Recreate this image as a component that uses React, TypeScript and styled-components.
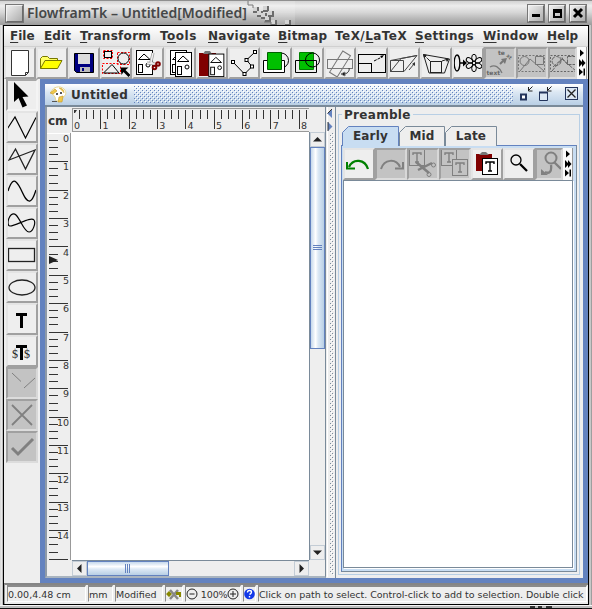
import React from "react";
import styled, { createGlobalStyle, css } from "styled-components";

const BLUE = "#6382bf";
const STEEL = "#7a8a99";
const PANEL = "#eeeeee";

const Global = createGlobalStyle`
  * { box-sizing: border-box; }
  body { margin: 0; overflow: hidden; background: #c8c8c8; }
  svg { display: block; flex: none; }
`;

const Shell = styled.div`
  width: 592px;
  height: 609px;
  display: flex;
  flex-direction: column;
  background: linear-gradient(90deg, #c4c4c4 0, #f4f4f4 1px, #d8d8d8 2px, #a2a2a2 3px, #a2a2a2 589px, #dcdcdc 590px, #8a8a8a 592px);
  color: #333333;
  font-family: "DejaVu Sans", sans-serif;
  white-space: nowrap;
`;

const TitleBar = styled.header`
  height: 25px;
  flex: none;
  display: flex;
  align-items: center;
  padding: 0 5px;
  border-top: 1px solid #8f8f8f;
  background: linear-gradient(#d2d2d2, #ededed 20%, #d6d6d6 48%, #b6b6b6 75%, #9c9c9c);
`;

const bevel = css`
  border: 2px solid;
  border-color: #f2f2f2 #6a6a6a #6a6a6a #f2f2f2;
  outline: 1px solid #777777;
  outline-offset: -1px;
  background: linear-gradient(135deg, #eeeeee, #adadad);
`;

const WindowMenuBox = styled.div`
  width: 19px;
  height: 19px;
  ${bevel}
`;

const WindowTitle = styled.h1`
  margin: 0 0 0 3px;
  width: 220px;
  font: 600 14px/20px "Noto Sans", sans-serif;
  color: #454748;
`;

const WindowButtons = styled.div`
  display: flex;
  gap: 3px;
  margin-left: auto;
`;

const WindowButton = styled.div`
  width: 18px;
  height: 19px;
  display: grid;
  place-items: center;
  ${bevel}
`;

const Client = styled.main`
  width: 586px;
  margin-left: 3px;
  height: 580px;
  flex: none;
  display: flex;
  flex-direction: column;
  border: 1px solid #000;
  background: ${PANEL};
`;

const MenuBar = styled.nav`
  height: 21px;
  flex: none;
  display: flex;
  background: linear-gradient(#ffffff, #e2e2e2);
  border-bottom: 1px solid #d0d0d0;
`;

const MenuItem = styled.span<{ $w: number; $track: number }>`
  width: ${(p) => p.$w}px;
  padding-left: 6px;
  font: bold 12px/20px "DejaVu Sans", sans-serif;
  letter-spacing: ${(p) => p.$track}px;
  u { text-underline-offset: 2px; text-decoration-thickness: 1px; }
`;

const Toolbar = styled.div`
  display: flex;
  height: 32px;
  flex: none;
`;

const ToolButton = styled.div<{ $off?: boolean; $w?: number; $down?: boolean }>`
  width: ${(p) => p.$w ?? 32}px;
  height: 32px;
  flex: none;
  overflow: hidden;
  border: 2px solid;
  border-color: ${(p) =>
    p.$off ? "#a0a0a0 #d8d8d8 #dcdcdc #a0a0a0" : p.$down ? "#a8a8a8 #f4f4f4 #f4f4f4 #a0a0a0" : "#e4e4e4 #a0a0a0 #a0a0a0 #e4e4e4"};
  background: ${(p) => (p.$off ? "#c3c3c3" : PANEL)};
  svg { margin: -2px; }
`;

const MoreButton = styled.div`
  width: 10px;
  height: 32px;
  background: #fafafa;
  border-right: 1px solid #999;
`;

const Middle = styled.div`
  display: flex;
  height: 504px;
  flex: none;
`;

const SideTools = styled.div`
  width: 36px;
  flex: none;
  padding-left: 2px;
`;

const InternalFrame = styled.section`
  width: 548px;
  padding: 5px;
  background: ${BLUE};
`;

const InternalTitle = styled.div`
  height: 23px;
  display: flex;
  align-items: center;
  padding-left: 5px;
  background: linear-gradient(#ffffff, #dbe7f3 40%, #b9cfe5);
  border-bottom: 2px solid ${STEEL};
`;

const InternalName = styled.h2`
  margin: 0 0 0 4px;
  width: 63px;
  font: bold 12px/18px "DejaVu Sans", sans-serif;
  letter-spacing: 0.3px;
`;

const Content = styled.div`
  display: flex;
  height: 471px;
  background: ${PANEL};
`;

const CanvasPane = styled.div`
  width: 281px;
  flex: none;
  display: grid;
  grid-template-columns: 24px 238px 16px;
  grid-template-rows: 25px 428px 16px;
  border: solid ${STEEL};
  border-width: 0 1px 2px 2px;
  border-left-color: #8f9aa6;
  border-bottom-color: #a9b4bf;
`;

const UnitCell = styled.div`
  padding: 7px 0 0 1px;
  font: bold 12px/14px "DejaVu Sans", sans-serif;
`;

const Page = styled.div`
  background: #fff;
`;

const HorizontalBar = styled.div`
  grid-column: 2;
  display: flex;
  margin-left: 1px;
  border-top: 1px solid ${STEEL};
`;

const VerticalBar = styled.div`
  display: flex;
  flex-direction: column;
  border-left: 1px solid ${STEEL};
`;

const Track = styled.div`
  flex: 1;
  background: ${PANEL};
`;

const ScrollArrow = styled.div`
  width: 15px;
  height: 15px;
  flex: none;
  background: ${PANEL};
  border: 1px solid #c3ccd5;
  display: grid;
  place-items: center;
`;

const Thumb = styled.div<{ $vertical?: boolean; $len: number }>`
  display: grid;
  place-items: center;
  flex: none;
  border: 1px solid ${BLUE};
  ${(p) =>
    p.$vertical
      ? css`
          height: ${p.$len}px;
          background: linear-gradient(90deg, #c5d8ec, #ffffff 35%, #dde9f5 55%, #b8cfe5);
        `
      : css`
          width: ${p.$len}px;
          background: linear-gradient(#c5d8ec, #ffffff 35%, #dde9f5 55%, #b8cfe5);
        `}
`;

const Divider = styled.div`
  width: 10px;
  flex: none;
  border-right: 1px solid ${STEEL};
  background: ${PANEL};
`;

const SidePane = styled.div`
  width: 247px;
  padding: 0 3px 3px 2px;
`;

const Preamble = styled.fieldset`
  margin: 0;
  padding: 0 2px 1px 2px;
  border: 1px solid #b8cfe5;
  height: 468px;
  min-width: 0;
`;

const Legend = styled.legend`
  margin-left: 1px;
  padding: 1px 2px 0;
  font: bold 12px/14px "DejaVu Sans", sans-serif;
  letter-spacing: 0.3px;
`;

const Tabs = styled.div`
  display: flex;
  height: 20px;
  margin: 4px 0 -1px 1px;
`;

const Tab = styled.div<{ $w: number }>`
  position: relative;
  width: ${(p) => p.$w}px;
  font: bold 12px/20px "DejaVu Sans", sans-serif;
  letter-spacing: 0.2px;
  text-align: center;
  svg { position: absolute; inset: 0; }
  span { position: relative; }
`;

const TabBody = styled.div`
  height: 427px;
  padding: 2px 3px 3px 1px;
  border: 1px solid ${STEEL};
  border-left-color: ${BLUE};
  border-top-color: ${BLUE};
  background: #c8ddf2;
`;

const TabToolbar = styled(Toolbar)`
  background: ${PANEL};
`;

const Editor = styled.div`
  height: 388px;
  background: #fff;
  border: 1px solid ${STEEL};
  box-shadow: 1px 1px #fff;
`;

const StatusBar = styled.footer`
  height: 21px;
  flex: none;
  display: flex;
  gap: 2px;
  padding: 0 2px;
  border-top: 2px solid #858585;
  border-left: 1px solid #999;
`;

const StatusCell = styled.div<{ $w: number; $track?: number }>`
  width: ${(p) => p.$w}px;
  height: 17px;
  flex: none;
  overflow: hidden;
  display: flex;
  align-items: center;
  border: solid;
  border-width: 2px 1px 1px 1px;
  border-color: #8a8a8a #fff #fff #8a8a8a;
  font: 9.5px/13px "DejaVu Sans", sans-serif;
  letter-spacing: ${(p) => p.$track ?? 0}px;
`;

const Grip = styled.div`
  height: 4px;
  border-top: 1px solid #f4f4f4;
  border-bottom: 1px solid #111;
  background: #bdbdbd;
`;

const Ic = ({ children, c = "#000" }: { children: React.ReactNode; c?: string }) => (
  <svg width="32" height="32" viewBox="0 0 32 32" fill="none" stroke={c} strokeWidth="1">
    {children}
  </svg>
);

const Doc = ({ x, y }: { x: number; y: number }) => (
  <g transform={`translate(${x} ${y})`}>
    <rect x=".5" y=".5" width="16" height="24" fill="#fff" />
    <path d="M2.500 9.500 8 4l6 5.500z" />
    <rect x="2.500" y="14.500" width="4" height="8" />
    <circle cx="12" cy="15" r="2" />
  </g>
);

const MoreArrows = () => (
  <svg width="9" height="32" viewBox="0 0 9 32" fill="#000">
    <path d="M3 2.500 7 6 3 9.500zM2 12l3 3v-3l3.500 4L5 20v-3l-3 3zM2 21.500 6 25l-4 3.500zM6.500 21.500h1.500v7H6.500z" />
  </svg>
);

const mainTools: { icon: React.ReactNode; off?: boolean; w?: number }[] = [
  { icon: <Ic c="#333"><path d="M7.500 3.500h17v22l-3 3h-14z" fill="#fff" /><path d="M24.500 25.500h-3v3" /></Ic> },
  { icon: <Ic c="#777700"><path d="M4.500 21.500v-10l2-2h5l2 2h8v3" fill="#ffff66" /><path d="M4.500 21.500 9 13.500h17l-4.500 8z" fill="#ffff00" /></Ic> },
  { icon: <Ic><path d="M6.500 6.500h19v19h-17l-2-2z" fill="#000080" /><path d="M10 7h12v10H10z" fill="#dcdcdc" stroke="none" /><path d="M12 20h10v5H12z" fill="#bbb" stroke="none" /><path d="M14 21h2v3h-2z" fill="#000080" stroke="none" /></Ic> },
  {
    icon: (
      <Ic>
        <g stroke="#f00" strokeDasharray="2 1.500"><rect x="3.500" y="3.500" width="9" height="8" /><rect x="17.500" y="5.500" width="12" height="12" /><rect x="2.500" y="16.500" width="18" height="10" /></g>
        <rect x="4.500" y="4.500" width="7" height="6" /><circle cx="23.500" cy="11.500" r="5.500" /><path d="M3.500 26 12 17.500 19 26z" />
        <path d="M20.500 20.500h8l-3 2.500 5 5-2 2-5-5-2 3z" fill="#000" stroke="none" />
      </Ic>
    ),
  },
  {
    icon: (
      <Ic>
        <Doc x={4} y={3} />
        <path d="m21 6-2 9 5 4M15 16l8 1" stroke="#999" strokeWidth="3" />
        <path d="m21 6-2 9 5 4M15 16l8 1" stroke="#eee" strokeWidth="1.500" />
        <g stroke="#800000" strokeWidth="2"><circle cx="22.500" cy="20.500" r="1.800" /><circle cx="26" cy="17" r="1.800" /></g>
      </Ic>
    ),
  },
  { icon: <Ic><Doc x={6} y={3} /><Doc x={11} y={5} /></Ic> },
  { icon: <Ic><path d="M3 6h17v23H3z" fill="#800000" stroke="none" /><path d="M7 7h9l-2-3H9z" fill="#777" stroke="none" /><g transform="translate(2 0) scale(.94)"><Doc x={11} y={7} /></g></Ic> },
  { icon: <Ic><path d="M5 15 16.500 27 24 19.500 18.500 13 27 5" />{[[5, 15], [16.5, 27], [24, 19.5], [18.5, 13], [27, 5]].map(([x, y]) => <rect key={x} x={x - 1.5} y={y - 1.5} width="3" height="3" fill="#fff" />)}</Ic> },
  { icon: <Ic><circle cx="21" cy="13.500" r="7.500" /><path d="M3.500 13.500h21v12h-21z" fill="#fff" /><path d="M7.500 5.500h14v17h-14z" fill="#00c000" stroke="#006000" /></Ic> },
  { icon: <Ic><path d="M7.500 5.500h14v17h-14z" fill="#00c000" stroke="#008000" /><path d="M3.500 13.500h21v12h-21z" /><circle cx="20.500" cy="13" r="7" /></Ic> },
  { icon: <Ic c="#777"><rect x="3.500" y="12.500" width="25" height="9" /><rect x="3.500" y="12.500" width="25" height="9" transform="rotate(-58 16 17)" /><path d="M25 21c1 3-2 6-5 6" stroke="#333" /><path d="m17 27 4-2v4z" fill="#000" /></Ic> },
  { icon: <Ic><rect x="2.500" y="7.500" width="27" height="18" /><rect x="2.500" y="16.500" width="13" height="9" /><path d="m18 14 8-4" strokeDasharray="3 1" /><path d="m24 9 4-1-2 3z" fill="#000" stroke="none" /></Ic> },
  { icon: <Ic c="#444"><path d="M2.500 24.500v-11h13v11zM2.500 24.500 13 11.500 29 8.500 16 24.500zM2.500 13.500 29 8.500M21 23l5-6" /><path d="m24 17 3-2v4z" fill="#333" stroke="none" /></Ic> },
  { icon: <Ic c="#222"><path d="M3.500 7.500 29.500 12 24.500 26H9z" /><rect x="10.500" y="14.500" width="11" height="11" /><path d="m10 14-6-6M22 14l6-2" strokeDasharray="4 1" /><path d="m3 7 4 1-3 3zM29 12l-4-1 2 4z" fill="#222" stroke="none" /></Ic> },
  { icon: <Ic><ellipse cx="5" cy="16" rx="2.800" ry="8" strokeWidth="1.300" /><path d="M8 16h5" strokeWidth="1.500" /><path d="m11 12.500 4 3.500-4 3.500z" fill="#000" stroke="none" />{[0, 60, 120, 180, 240, 300].map((a) => <ellipse key={a} cx="22" cy="10.800" rx="2.300" ry="3.500" transform={`rotate(${a} 22 16)`} />)}<circle cx="22" cy="16" r="1.800" /></Ic> },
  {
    off: true,
    icon: (
      <Ic c="#777">
        <path d="M6 20c5-3 9 0 12 6" strokeWidth="1.200" /><path d="m16 17 3-3" strokeWidth="2" /><path d="m17 12 6-1-2 6z" fill="#777" stroke="none" />
        <g fill="#666" stroke="none" fontFamily="DejaVu Sans" fontWeight="bold" fontSize="6"><text x="2.500" y="28">text</text><text x="14" y="8">te</text><text x="22" y="9" fontSize="5" transform="rotate(45 22 9)">xt</text></g>
      </Ic>
    ),
  },
  { off: true, icon: <Ic c="#777"><rect x="2.500" y="8.500" width="26" height="16" strokeDasharray="2 1.500" /><circle cx="8.500" cy="14" r="4.500" /><path d="M19.500 9.500h8v8h-8zM4 24 14 12l14 12" /></Ic> },
  { off: true, w: 29, icon: <Ic c="#666"><rect x="2.500" y="8.500" width="26" height="16" strokeDasharray="2 1.500" /><circle cx="8.500" cy="14" r="4.500" strokeDasharray="4 1" /><path d="M19.500 9.500h8v8h-8zM4 24 14 12l14 12M5 20l10-9h-3M14 11l6 7" strokeDasharray="4 1" /></Ic> },
];

const sideTools: { icon: React.ReactNode; off?: boolean; down?: boolean }[] = [
  { down: true, icon: <Ic><path d="M8 3v20l4.500-4 4 9.500 4.500-2-4.500-8.500 6-.5z" fill="#000" stroke="none" /></Ic> },
  { icon: <Ic><path d="M1.500 17.500 9 6 19.500 27 30 6.500" strokeWidth="1.200" /></Ic> },
  { icon: <Ic c="#222"><path d="M3 17 29 7 19.500 26 9.500 6z" strokeWidth="1.300" /></Ic> },
  { icon: <Ic><path d="M2 16C5 6 8 5 10 7c6 5 8 20 14 19 3-1 4-5 6-11" strokeWidth="1.300" /></Ic> },
  { icon: <Ic><path d="M2 15C3 8 7 5 10 8c5 5 8 17 13 17 4 0 7-9 5-12-3-4-18 6-24 6-2 0-2-2-2-4z" strokeWidth="1.200" /></Ic> },
  { icon: <Ic c="#222"><rect x="2.500" y="9.500" width="26" height="13" strokeWidth="1.300" /></Ic> },
  { icon: <Ic c="#222"><ellipse cx="16" cy="16.500" rx="13" ry="7.500" strokeWidth="1.300" /></Ic> },
  { icon: <Ic><path d="M10 11.500h11" strokeWidth="3" /><path d="M15.500 11v14" strokeWidth="3" /></Ic> },
  { icon: <Ic><path d="M10 11.500h11" strokeWidth="3" /><path d="M15.500 11v14" strokeWidth="3" /><g stroke="none" fill="#222" fontFamily="Liberation Serif" fontSize="12"><text x="6" y="23">$</text><text x="18" y="23">$</text></g></Ic> },
  { off: true, icon: <Ic c="#808080"><path d="m6 6 9 8.500M18 21 29 11" /></Ic> },
  { off: true, icon: <Ic c="#808080"><path d="m6 6 20 20M26 6 6 26" strokeWidth="1.800" /></Ic> },
  { off: true, icon: <Ic c="#808080"><path d="m6 17 6 6L27 8" strokeWidth="3" /></Ic> },
];

const Letter = ({ x, y, fill }: { x: number; y: number; fill?: string }) => (
  <g transform={`translate(${x} ${y})`}>
    <rect x=".5" y=".5" width="15" height="16" fill={fill ?? "none"} />
    <path d="M4 6V4h8v2M8 4v9M6 13h4" strokeWidth="1.400" />
  </g>
);

const textTools: { icon: React.ReactNode; off?: boolean; w?: number }[] = [
  { icon: <Ic c="#008000"><path d="M6 19c4-9 16-8 19 2" strokeWidth="2.200" /><path d="M4 14v6.500h8" strokeWidth="2" /></Ic> },
  { off: true, icon: <Ic c="#808080"><path d="M6 21c3-10 15-11 19-2" strokeWidth="2" /><path d="M28 14v6.500h-8" strokeWidth="2" /></Ic> },
  { off: true, icon: <Ic c="#808080"><Letter x={2} y={1} /><path d="m9 14 13 11M11 22l14-7" strokeWidth="2.500" /><circle cx="26.500" cy="17" r="2" /><circle cx="22" cy="26.500" r="2" /></Ic> },
  { off: true, icon: <Ic c="#808080"><Letter x={2} y={1} /><Letter x={13} y={11} fill="#c3c3c3" /></Ic> },
  { icon: <Ic><path d="M5 6h16v17H5z" fill="#800000" stroke="none" /><path d="M8 7h10l-3-3h-4z" fill="#777" stroke="none" /><Letter x={11} y={10} fill="#fff" /></Ic> },
  { icon: <Ic><circle cx="13" cy="12" r="5" strokeWidth="1.300" /><path d="m17 16 7 7" strokeWidth="2.300" /></Ic> },
  { off: true, w: 28, icon: <Ic c="#808080"><circle cx="16" cy="10" r="5.500" strokeWidth="2" /><path d="m19 14 7 7M16 17c1 7-2 9-6 7" strokeWidth="2.300" /><path d="M6 21v6h7z" fill="#808080" stroke="none" /></Ic> },
];

const menus: [string, string, string, number, number][] = [
  ["", "F", "ile", 34, 0],
  ["", "E", "dit", 36, 0.1],
  ["", "T", "ransform", 80, 0.3],
  ["T", "o", "ols", 48, 0.5],
  ["", "N", "avigate", 70, 0.2],
  ["", "B", "itmap", 57, 0.2],
  ["TeX/", "L", "aTeX", 80, 0.45],
  ["", "S", "ettings", 68, 0.3],
  ["", "W", "indow", 64, 0.3],
  ["", "H", "elp", 38, 0.1],
];

const UNIT = 28.38;

function HorizontalRuler() {
  const ticks = Array.from({ length: 33 }, (_, i) => i + 1);
  return (
    <svg width="238" height="25" fontFamily="DejaVu Sans" fontSize="9.500" fill="#333">
      <path d="M1.500 1v24M1 24.500h237M2 1.500h236" stroke="#999" fill="none" />
      <path d="M3 3h3l-2 3H3z" />
      {ticks.map((i) => {
        const x = Math.floor((i * UNIT) / 4 + 1.3);
        return <rect key={i} x={x} y="3" width="1" height={i % 4 ? 9 : 19} />;
      })}
      {Array.from({ length: 9 }, (_, n) => (
        <text key={n} x={n * UNIT + 3} y="21.500">{n}</text>
      ))}
    </svg>
  );
}

function VerticalRuler() {
  return (
    <svg width="24" height="428" fontFamily="DejaVu Sans" fontSize="9.500" fill="#333">
      <path d="M0 1.500h23" stroke="#fff" />
      <path d="M23.500 1v427" stroke="#999" />
      {Array.from({ length: 60 }, (_, k) => k + 1).map((i) => (
        <rect key={i} x="2" y={Math.floor((i * UNIT) / 4 + 1.4)} width={i % 4 ? 9 : 19} height="1" />
      ))}
      {Array.from({ length: 15 }, (_, n) => (
        <text key={n} x="22" y={n * UNIT + 10} textAnchor="end">{n}</text>
      ))}
      <path d="M2 124l9 4-9 4z" fill="#222" />
    </svg>
  );
}

const Arrow = ({ d }: { d: string }) => (
  <svg width="9" height="9" viewBox="0 0 9 9"><path d={d} fill="#222" /></svg>
);

const TitleDots = () => (
  <svg width="379" height="17" viewBox="0 0 379 17">
    <defs>
      <pattern id="bumps" width="4" height="4" patternUnits="userSpaceOnUse">
        <path d="M0 0h1v1H0zM2 2h1v1H2z" fill={BLUE} />
        <path d="M1 1h1v1H1zM3 3h1v1H3z" fill="#fff" />
      </pattern>
    </defs>
    <rect width="379" height="17" fill="url(#bumps)" />
  </svg>
);

const FrameControls = () => (
  <svg width="66" height="21" viewBox="0 0 66 21" fill="none">
    <path d="M8 10.500h5v5H8z" fill="#fff" stroke="#23345c" strokeWidth="2" />
    <path d="M26.500 8.500h8v8h-8z" fill="#dbe7f3" stroke="#23345c" />
    <path d="M26 8.500h9" stroke="#23345c" strokeWidth="2" />
    <path d="m19.500 2.500-4 4M15.500 3v4h4M38.500 2.500l-4 4M34.500 3v4h4" stroke="#222" />
    <rect x="52.500" y="3.500" width="12" height="12" fill="#dbe7f3" stroke="#23345c" />
    <path d="m54.500 5.500 8 8M62.500 5.500l-8 8" stroke="#222" strokeWidth="1.300" />
  </svg>
);

const tabShape = (w: number, active?: boolean) => (
  <svg width={w} height="20" viewBox={`0 0 ${w} 20`}>
    <path d={`M.5 20V6.500L6.500.5H${w - 0.5}V20`} fill={active ? "#c8ddf2" : PANEL} stroke={active ? BLUE : STEEL} />
  </svg>
);

export default function App() {
  return (
    <Shell>
      <Global />
      <TitleBar>
        <WindowMenuBox />
        <WindowTitle>FlowframTk – Untitled[Modified]</WindowTitle>
        <svg width="48" height="24" viewBox="0 0 48 24">
          <path d="M0 0v4l7 2v6l9 1 6 6 4 5h22V0z" fill="#fff" opacity=".15" />
          {[[6, 6], [10, 10], [16, 5], [14, 12], [18, 15], [21, 10], [24, 19], [38, 19]].map(([x, y]) => (
            <g key={`${x}-${y}`}>
              <rect x={x} y={y} width="6" height="6" fill="#6c6c6c" />
              <rect x={x} y={y} width="4" height="4" fill="#d4d4d4" />
            </g>
          ))}
          <path d="M1 0v4h5v3M17 21h7v3" stroke="#777" fill="none" />
        </svg>
        <WindowButtons>
          <WindowButton><svg width="12" height="12"><path d="M2 7h8v3H2z" /></svg></WindowButton>
          <WindowButton><svg width="12" height="12"><path d="M2 2h9v9H2zM4 6v3h5V6z" fillRule="evenodd" /></svg></WindowButton>
          <WindowButton><svg width="12" height="12"><path d="m2 2 8 8M10 2 2 10" stroke="#000" strokeWidth="3" /></svg></WindowButton>
        </WindowButtons>
      </TitleBar>
      <Client>
        <MenuBar>
          {menus.map(([a, u, b, w, t]) => (
            <MenuItem key={u + b} $w={w} $track={t}>{a}<u>{u}</u>{b}</MenuItem>
          ))}
        </MenuBar>
        <Toolbar>
          {mainTools.map((t, i) => <ToolButton key={i} $off={t.off} $w={t.w}>{t.icon}</ToolButton>)}
          <MoreButton><MoreArrows /></MoreButton>
        </Toolbar>
        <Middle>
          <SideTools>
            {sideTools.map((t, i) => <ToolButton key={i} $off={t.off} $down={t.down}>{t.icon}</ToolButton>)}
          </SideTools>
          <InternalFrame>
            <InternalTitle>
              <svg width="17" height="17" viewBox="0 0 17 17">
                <path d="M1 6c2-5 9-7 13-3 3 3 2 7-1 8l-1 4H6l-1-4z" fill="#fff" stroke="#e8d890" />
                <path d="M0 7 5 3l2 2-4 3zM9 2c3 0 5 2 5 5M9 11l4-1-1 6H8z" fill="#f0c948" stroke="#c4972d" strokeWidth=".6" />
                <path d="M6 7h2v2H6zM10 6h2v2h-2zM2 15h5v1H2z" fill="#555" />
              </svg>
              <InternalName>Untitled</InternalName>
              <TitleDots />
              <FrameControls />
            </InternalTitle>
            <Content>
              <CanvasPane>
                <UnitCell>cm</UnitCell>
                <HorizontalRuler />
                <div />
                <VerticalRuler />
                <Page />
                <VerticalBar>
                  <ScrollArrow><Arrow d="M0 6.500 4.500 2 9 6.500z" /></ScrollArrow>
                  <Thumb $vertical $len={202}>
                    <svg width="9" height="6"><path d="M0 .5h9M0 2.500h9M0 4.500h9" stroke={BLUE} /></svg>
                  </Thumb>
                  <Track />
                  <ScrollArrow><Arrow d="M0 2.500 4.500 7 9 2.500z" /></ScrollArrow>
                </VerticalBar>
                <HorizontalBar>
                  <ScrollArrow><Arrow d="M6.500 0 2 4.500 6.500 9z" /></ScrollArrow>
                  <Thumb $len={82}>
                    <svg width="6" height="9"><path d="M.5 0v9M2.500 0v9M4.500 0v9" stroke={BLUE} /></svg>
                  </Thumb>
                  <Track />
                  <ScrollArrow><Arrow d="M2.500 0 7 4.500 2.500 9z" /></ScrollArrow>
                </HorizontalBar>
              </CanvasPane>
              <Divider>
                <svg width="9" height="470" viewBox="0 0 9 470">
                  <defs>
                    <pattern id="grain" width="4" height="4" patternUnits="userSpaceOnUse">
                      <path d="M0 0h1v1H0zM2 2h1v1H2z" fill={STEEL} />
                      <path d="M1 1h1v1H1zM3 3h1v1H3z" fill="#fff" />
                    </pattern>
                  </defs>
                  <path d="M1.500 0v470" stroke="#fff" />
                  <rect x="4" y="26" width="4" height="442" fill="url(#grain)" />
                  <path d="M6 2v9L1.500 6.500zM2 15v9l4.500-4.500z" fill={BLUE} />
                  <path d="M2 15v9M6 2 1.500 6.500" stroke="#333" fill="none" />
                </svg>
              </Divider>
              <SidePane>
                <Preamble>
                  <Legend>Preamble</Legend>
                  <Tabs>
                    <Tab $w={57}>{tabShape(57, true)}<span>Early</span></Tab>
                    <Tab $w={46}>{tabShape(46)}<span>Mid</span></Tab>
                    <Tab $w={52}>{tabShape(52)}<span>Late</span></Tab>
                  </Tabs>
                  <TabBody>
                    <TabToolbar>
                      {textTools.map((t, i) => <ToolButton key={i} $off={t.off} $w={t.w}>{t.icon}</ToolButton>)}
                      <MoreButton><MoreArrows /></MoreButton>
                    </TabToolbar>
                    <Editor />
                  </TabBody>
                </Preamble>
              </SidePane>
            </Content>
          </InternalFrame>
        </Middle>
        <StatusBar>
          <StatusCell $w={79}>0.00,4.48 cm</StatusCell>
          <StatusCell $w={25}>mm</StatusCell>
          <StatusCell $w={48}>Modified</StatusCell>
          <StatusCell $w={18}>
            <svg width="16" height="14" viewBox="0 0 16 14"><path d="m4 3 8 9M12 3l-8 9" stroke="#888" strokeWidth="2.500" /><path d="M0 7l3-3 3 3-3 3zM10 5h5v5h-2V8h-3z" fill="#888800" /></svg>
          </StatusCell>
          <StatusCell $w={56} $track={-0.15}>
            <svg width="12" height="14" fill="none" stroke="#222"><circle cx="6" cy="7" r="5" /><path d="M3.500 7h5" /></svg>
            &nbsp;100%
            <svg width="12" height="14" fill="none" stroke="#222"><circle cx="6" cy="7" r="5" /><path d="M3 7h6M6 4v6" /></svg>
          </StatusCell>
          <StatusCell $w={13}>
            <svg width="11" height="12"><circle cx="5.500" cy="6" r="5.300" fill="#1238e8" /><path d="M3.500 4.500q0-2 2-2t2 1.500-2 2.500M5.500 8v1.500" stroke="#fff" fill="none" strokeWidth="1.400" /></svg>
          </StatusCell>
          <StatusCell $w={329} $track={-0.03}>Click on path to select. Control-click to add to selection. Double click</StatusCell>
        </StatusBar>
      </Client>
      <Grip>
        <svg width="592" height="2"><path d="M530 1h5M538 1h4M546 1h6" stroke="#333" strokeWidth="2" /></svg>
      </Grip>
    </Shell>
  );
}
